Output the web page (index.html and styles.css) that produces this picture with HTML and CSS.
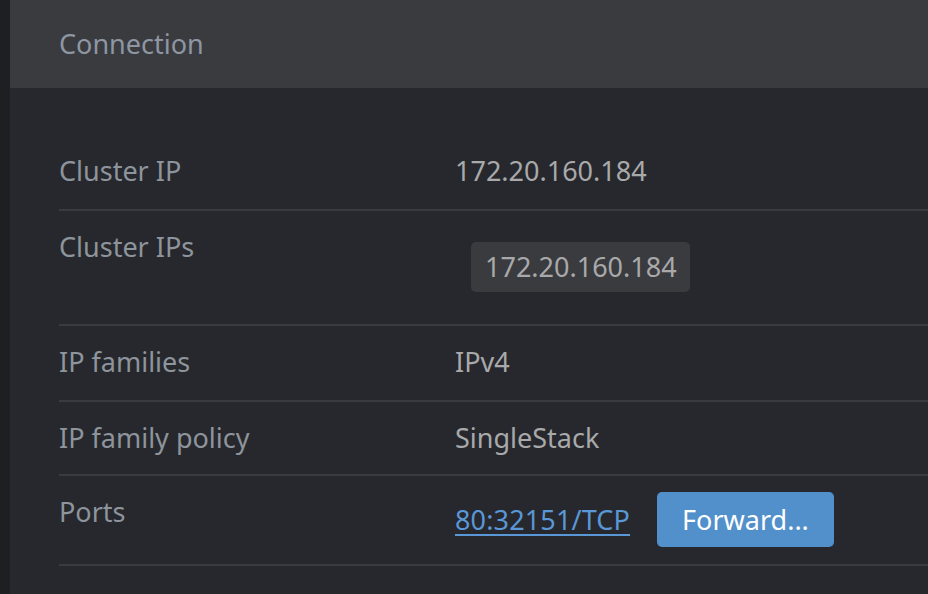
FILE: index.html
```html
<!DOCTYPE html>
<html lang="en">
<head>
    <meta charset="UTF-8">
    <title>Connection</title>
    <link rel="stylesheet" href="styles.css">
</head>
<body>

<div class="layout">
    <div class="sidebar"></div>

    <div class="drawer">
        <div class="drawer-title">Connection</div>

        <div class="drawer-body">
            <div class="item">
                <div class="name">Cluster IP</div>
                <div class="value">172.20.160.184</div>
            </div>
            <div class="item">
                <div class="name">Cluster IPs</div>
                <div class="value">
                    <span class="badge">172.20.160.184</span>
                </div>
            </div>
            <div class="item">
                <div class="name">IP families</div>
                <div class="value">IPv4</div>
            </div>
            <div class="item tight">
                <div class="name">IP family policy</div>
                <div class="value">SingleStack</div>
            </div>
            <div class="item ports">
                <div class="name">Ports</div>
                <div class="value">
                    <a href="#" class="port-link">80:32151/TCP</a>
                    <button class="forward">Forward...</button>
                </div>
            </div>
        </div>
    </div>
</div>

</body>
</html>
```

FILE: styles.css
```css
html, body {
    margin: 0;
    height: 100%;
    overflow: hidden;
}

body {
    background: #26282d;
    font-family: "Noto Sans", "Open Sans", sans-serif;
    font-size: 27px;
    line-height: 36px;
}

.layout {
    display: flex;
    height: 100%;
}

.sidebar {
    width: 10px;
    flex-shrink: 0;
    background: #1e1f23;
}

.drawer {
    flex: 1;
    background: #26282d;
}

.drawer-title {
    height: 88px;
    display: flex;
    align-items: center;
    padding-left: 49px;
    background: #3a3b3f;
    color: #8d96a2;
}

.drawer-body {
    padding: 45px 0 0 49px;
}

.item {
    display: flex;
    align-items: flex-start;
    padding: 18px 0 20px;
    border-bottom: 2px solid #3a3b3f;
}

.item:first-child {
    padding-top: 20px;
}

.item.tight {
    padding-bottom: 18px;
}

.name {
    width: 396px;
    flex-shrink: 0;
    color: #8e949c;
}

.value {
    display: flex;
    align-items: center;
    color: #a9a9aa;
}

.badge {
    display: inline-block;
    margin: 13px 0 12px 16px;
    padding: 7px 13px 7px 14px;
    background: #3a3b3f;
    border-radius: 5px;
}

.ports .value {
    margin: -2px 0 -3px;
}

.port-link {
    color: #5a97d6;
    text-decoration: underline;
    text-underline-offset: 4px;
    letter-spacing: 0.15px;
}

.forward {
    margin-left: 27px;
    height: 55px;
    padding: 0 25px;
    border: none;
    border-radius: 5px;
    background: #5190cb;
    color: #fff;
    font-family: inherit;
    font-size: 27px;
}
```
